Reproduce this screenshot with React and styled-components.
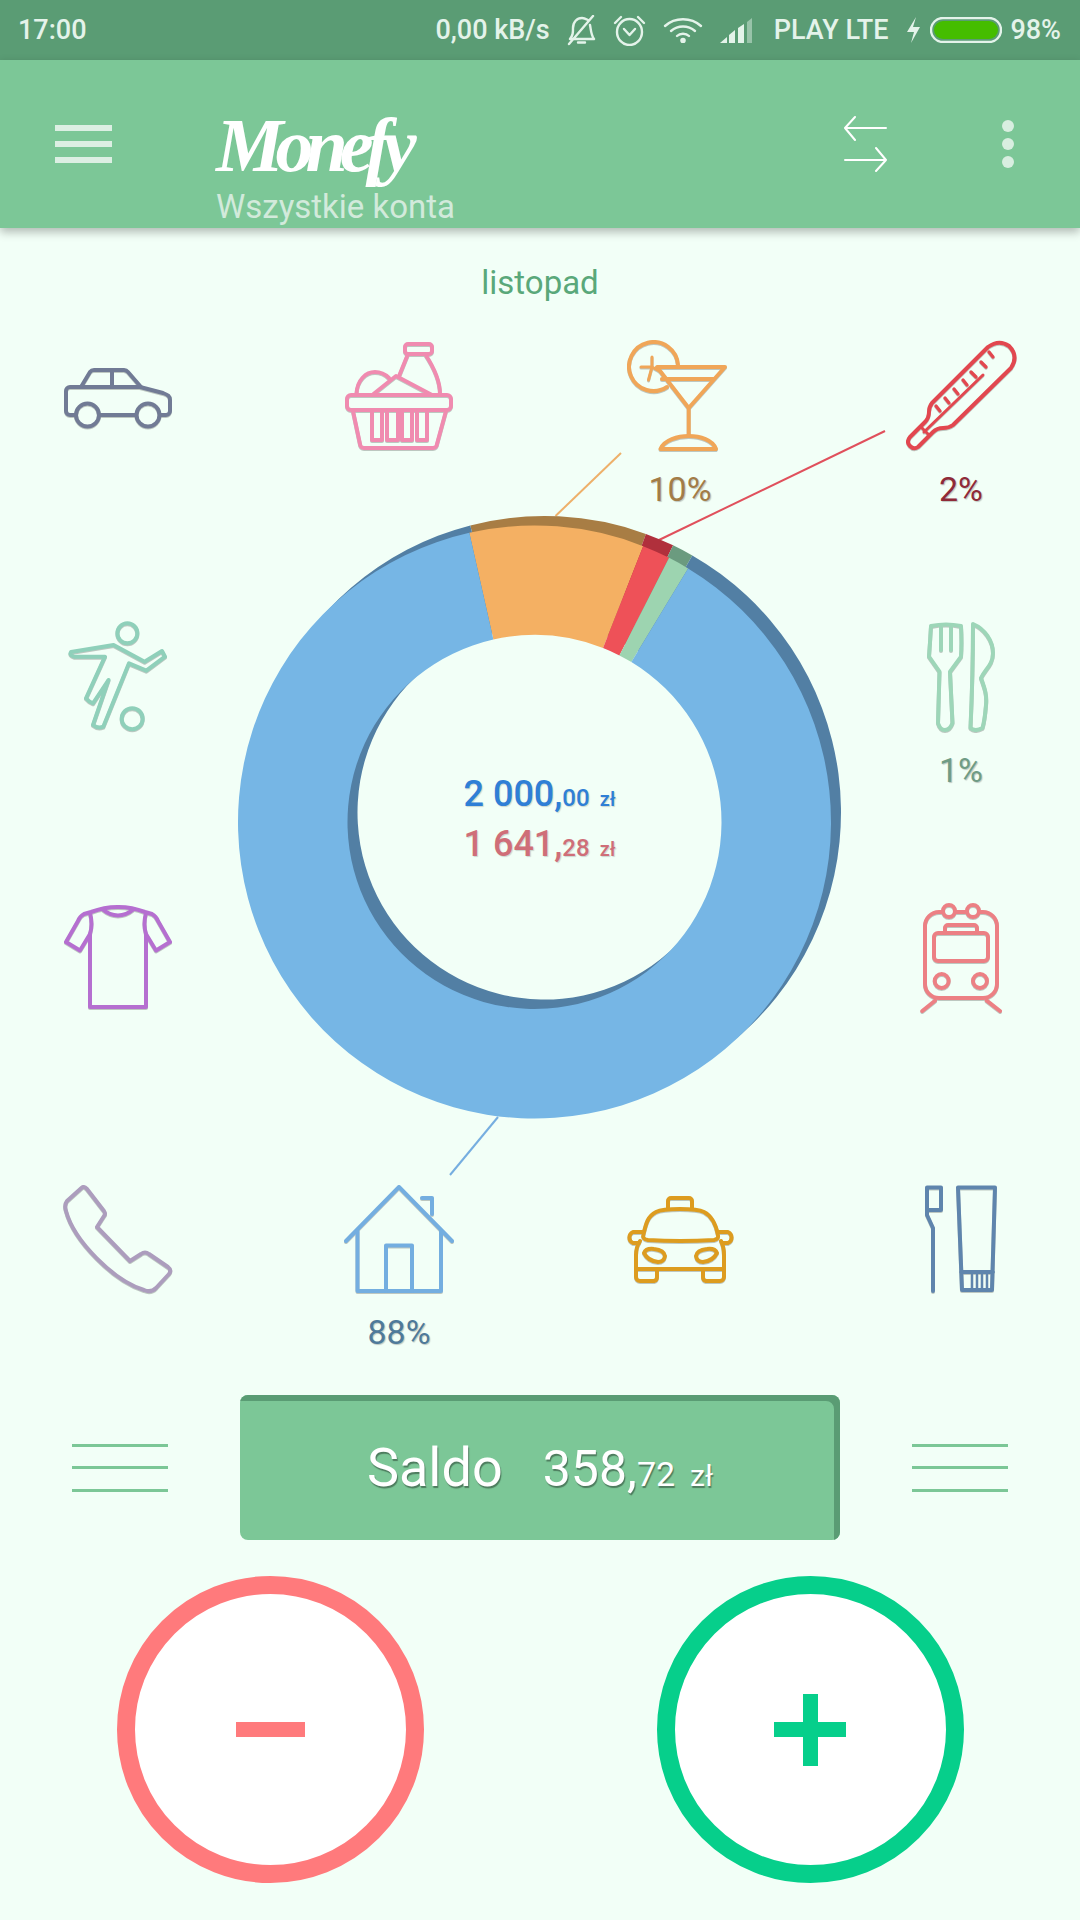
import React from 'react';
import styled, { createGlobalStyle } from 'styled-components';

const Global = createGlobalStyle`
  html, body { margin: 0; padding: 0; background: #f2fff7; }
  * { box-sizing: border-box; }
`;

const GREEN = '#7cc797';
const DARK_GREEN = '#5a9c74';
const SANS = 'Roboto, "Liberation Sans", sans-serif';

const Page = styled.div`
  width: 1080px;
  height: 1920px;
  overflow: hidden;
  background: #f2fff7;
  font-family: ${SANS};
`;

const StatusBar = styled.div`
  height: 60px;
  background: ${DARK_GREEN};
  display: flex;
  align-items: center;
  justify-content: space-between;
  padding: 0 19px 0 18px;
  color: #e4f3ea;
  font-size: 27px;
  font-weight: 500;
`;

const StatusGroup = styled.div`
  display: flex;
  align-items: center;
  gap: ${(p) => p.$gap}px;
`;

const StatusIcon = styled.svg`
  display: block;
  fill: none;
  stroke: #e4f3ea;
  stroke-width: 2.4;
  stroke-linecap: round;
  stroke-linejoin: round;
`;

const AppBar = styled.header`
  position: relative;
  z-index: 2;
  height: 168px;
  background: ${GREEN};
  box-shadow: 0 4px 9px rgba(0, 0, 0, 0.28);
  display: flex;
  align-items: center;
  padding: 0 66px 0 55px;
`;

const MenuLines = styled.div`
  width: 57px;
  height: 38px;
  display: flex;
  flex-direction: column;
  justify-content: space-between;
  margin-right: 104px;
  & > i {
    display: block;
    height: 6px;
    background: #dcefe3;
  }
`;

const TitleBlock = styled.div`
  flex: 1;
  align-self: stretch;
  display: flex;
  flex-direction: column;
  justify-content: flex-end;
  padding-bottom: 2px;
`;

const Logo = styled.div`
  font-family: "Liberation Serif", serif;
  font-style: italic;
  font-weight: 700;
  font-size: 76px;
  line-height: 84px;
  letter-spacing: -8px;
  color: #ffffff;
`;

const Subtitle = styled.div`
  font-size: 33px;
  line-height: 39px;
  color: #d2eadb;
`;

const SwapIcon = styled.svg`
  display: block;
  margin-right: 115px;
  fill: none;
  stroke: #ffffff;
  stroke-width: 2;
  stroke-linecap: round;
  stroke-linejoin: round;
`;

const DotsColumn = styled.div`
  display: flex;
  flex-direction: column;
  gap: 6px;
  & > i {
    display: block;
    width: 12px;
    height: 12px;
    border-radius: 50%;
    background: #d8eee0;
  }
`;

const MonthTitle = styled.div`
  height: 114px;
  padding-top: 35px;
  text-align: center;
  font-size: 33px;
  line-height: 39px;
  color: #5aa87a;
`;

const Board = styled.section`
  position: relative;
  display: grid;
  grid-template-columns: repeat(4, 108px);
  grid-auto-rows: 108px;
  gap: 173px;
  padding-left: 64px;
`;

const ChartSvg = styled.svg`
  position: absolute;
  inset: 0;
  display: block;
`;

const Tile = styled.div`
  position: relative;
  width: 108px;
  height: 108px;
  grid-column: ${(p) => p.$col};
  grid-row: ${(p) => p.$row};
`;

const Glyph = styled.svg`
  display: block;
  overflow: visible;
  fill: none;
  stroke: ${(p) => p.$color};
  stroke-width: 4;
  stroke-linecap: round;
  stroke-linejoin: round;
  filter: drop-shadow(0.5px 1px 0.5px rgba(0, 0, 0, 0.22));
`;

const Percent = styled.div`
  position: absolute;
  top: 100%;
  left: 0;
  right: 0;
  margin-top: 19px;
  text-align: center;
  font-size: 34px;
  line-height: 40px;
  color: ${(p) => p.$color};
  text-shadow: 1px 1px 1px rgba(0, 0, 0, 0.22);
`;

const ChartCenter = styled.div`
  position: relative;
  grid-column: 2 / span 2;
  grid-row: 2 / span 2;
  display: flex;
  flex-direction: column;
  align-items: center;
  justify-content: center;
  padding-top: 9px;
`;

const Amount = styled.div`
  display: flex;
  align-items: baseline;
  font-size: 36px;
  line-height: 45px;
  font-weight: 500;
  white-space: pre;
  color: ${(p) => p.$color};
  text-shadow: 1px 1px 1px rgba(0, 0, 0, 0.16);
`;

const Cents = styled.span`
  font-size: 24px;
`;

const Currency = styled.span`
  font-size: 20px;
  margin-left: 10px;
`;

const BalanceRow = styled.section`
  margin-top: 102px;
  display: flex;
  align-items: center;
  justify-content: center;
  gap: 72px;
`;

const SideLines = styled.div`
  width: 96px;
  height: 48px;
  display: flex;
  flex-direction: column;
  justify-content: space-between;
  & > i {
    display: block;
    height: 3px;
    background: ${GREEN};
  }
`;

const BalanceCard = styled.div`
  width: 600px;
  height: 145px;
  padding-top: 6px;
  border-radius: 8px;
  background: ${GREEN};
  box-shadow: inset -6px 6px 0 ${DARK_GREEN};
  display: flex;
  align-items: baseline;
  justify-content: center;
  line-height: 133px;
  color: #ffffff;
  white-space: pre;
  text-shadow: 1px 2px 1px rgba(0, 0, 0, 0.38);
`;

const BalanceLabel = styled.span`
  font-size: 54px;
  margin-right: 40px;
`;

const BalanceWhole = styled.span`
  font-size: 50px;
`;

const BalanceCents = styled.span`
  font-size: 34px;
`;

const BalanceCurrency = styled.span`
  font-size: 30px;
  margin-left: 15px;
`;

const ActionRow = styled.section`
  margin-top: 36px;
  display: flex;
  justify-content: center;
  gap: 233px;
`;

const RoundButton = styled.button`
  width: 307px;
  height: 307px;
  padding: 0;
  border-radius: 50%;
  border: 18px solid ${(p) => p.$color};
  background: #ffffff;
  display: flex;
  align-items: center;
  justify-content: center;
`;

const MinusSign = styled.i`
  display: block;
  width: 69px;
  height: 15px;
  background: #ff7a7c;
`;

const PlusSign = styled.i`
  display: block;
  width: 72px;
  height: 72px;
  background:
    linear-gradient(#06cf8b, #06cf8b) center / 100% 15px no-repeat,
    linear-gradient(#06cf8b, #06cf8b) center / 15px 100% no-repeat;
`;

const arcPoint = (cx, cy, r, deg) => {
  const t = (deg * Math.PI) / 180;
  return [cx + r * Math.sin(t), cy - r * Math.cos(t)];
};

// Annular sector measured clockwise from twelve o'clock.
const sector = (cx, cy, ro, ri, from, to) => {
  const [ax, ay] = arcPoint(cx, cy, ro, from);
  const [bx, by] = arcPoint(cx, cy, ro, to);
  const [ix, iy] = arcPoint(cx, cy, ri, to);
  const [jx, jy] = arcPoint(cx, cy, ri, from);
  const large = to - from > 180 ? 1 : 0;
  return `M${ax} ${ay}A${ro} ${ro} 0 ${large} 1 ${bx} ${by}L${ix} ${iy}A${ri} ${ri} 0 ${large} 0 ${jx} ${jy}Z`;
};

const RING_OUTER = 296.5;
const RING_INNER = 187;

const backSlices = [
  { from: -14.5, to: 20, fill: '#a87d44' },
  { from: 20, to: 25.7, fill: '#b0303c' },
  { from: 25.7, to: 29.9, fill: '#6b9b7f' },
  { from: 29.9, to: 345.5, fill: '#527fa4' },
];

const frontSlices = [
  { from: -12.7, to: 21.5, fill: '#f4b063' },
  { from: 21.5, to: 27, fill: '#ee5158' },
  { from: 27, to: 31.2, fill: '#9dd4b0' },
  { from: 31.2, to: 347.3, fill: '#76b6e5' },
];

const leaders = [
  { x1: 555.5, y1: 516, x2: 621, y2: 453, stroke: '#eeb06a' },
  { x1: 659, y1: 540, x2: 885, y2: 431, stroke: '#e0505c' },
  { x1: 498, y1: 1117, x2: 450, y2: 1175, stroke: '#76aee0' },
];

const categories = [
  {
    col: 1, row: 1, color: '#717b95',
    art: (
      <>
        <path d="M11 73H6a4 4 0 0 1-4-4V49a4 4 0 0 1 4-4H76L99 51C104 53 106 54 106 58V69a4 4 0 0 1-4 4H96M36 73H72" />
        <path d="M17 45L26 30a5 5 0 0 1 4-2H60a6 6 0 0 1 4 2L77 45M48 28V45" />
        <circle cx="23.5" cy="73" r="11.5" />
        <circle cx="84" cy="73" r="11.5" />
      </>
    ),
  },
  {
    col: 2, row: 1, color: '#f08bb0',
    art: (
      <>
        <rect x="60" y="2" width="27" height="10" rx="3" />
        <path d="M63 12L54.5 33M80 12C88 24 95 38 95 52" />
        <path d="M11.5 52C12 38 21 30 30 30C36 30 40 32 44 36" />
        <path d="M28.5 52L51 34L87 53" />
        <rect x="2" y="53" width="104" height="15" rx="4" />
        <path d="M8 69L15 102a4 4 0 0 0 4 4H88a4 4 0 0 0 4-4L101 69" />
        <path d="M27 69V98H37V69M42 69V98H53V69M57 69V98H67V69M72 69V98H82V69" />
      </>
    ),
  },
  {
    col: 3, row: 1, color: '#f0a658', percent: '10%', percentColor: '#a37c47',
    art: (
      <>
        <path d="M52 23A24.5 24.5 0 1 0 41 45" />
        <path d="M31 25H99L62.7 66ZM36 37H88M62.7 66V94" />
        <path d="M34.5 107C38 98 52 94 62.7 94C74 94 87 98 90 107Z" />
        <path d="M15 25H26M26 15V25L22.5 38M26 25L35 30" strokeWidth="3" />
      </>
    ),
  },
  {
    col: 4, row: 1, color: '#e2474f', percent: '2%', percentColor: '#8f2a38',
    art: (
      <>
        <path d="M81 5Q92-3 102 4Q112 14 104 26L46 83Q42 86 36 86Q30 86 26 90L11 105Q7 108 3 104Q-1 100 3 95L18 80Q22 76 22 70Q22 65 25 61Z" />
        <path d="M76 33L17 90M14 85L22 93" strokeWidth="3" />
        <path d="M82 10L86 15M74 20L79 25M64 30L69 35M56 38L60 43M47 47L51 52M38 56L42 61M29 64L33 69" strokeWidth="3.4" />
      </>
    ),
  },
  {
    col: 1, row: 2, color: '#8fd0ba',
    art: (
      <>
        <circle cx="63.4" cy="10.3" r="10" />
        <circle cx="68.2" cy="95.7" r="10.5" />
        <path d="M7 29L49.6 22L80.6 38.7L98 28L101 33.7L82.3 47.7L65 40.3L39.3 103.7Q34 106 29 102L44.5 57L29 80.3Q25 79 22 75.3L41 33.7H10Q5 32 7 29Z" />
      </>
    ),
  },
  {
    col: 4, row: 2, color: '#9dd6b8', percent: '1%', percentColor: '#6f9c85',
    art: (
      <>
        <path d="M24 3Q39 0 54 3Q55 20 54 33.7L43 48.7L45.5 100Q43 107 38 107Q33 107 31 100L32.5 48.7L22 33.7Q23 20 24 3ZM34 4V27M44 4V27" />
        <path d="M66 1C78 6 86 18 86 30C86 42 78 46 74 55C78 66 80 72 79 82C78 94 77 100 75.5 105Q68 109 63.5 105Q66 50 66 1Z" />
      </>
    ),
  },
  {
    col: 1, row: 3, color: '#b56fd0',
    art: (
      <>
        <path d="M27 8L20 10Q16 12 14 17L2 38L16 46.5L26 30V103H82V30L92 46.5L106 38L94 17Q92 12 88 10L81 8Q54-2 27 8Z" />
        <path d="M26 30Q29 20 26 9M82 30Q79 20 82 9M38 5Q54 18 70 5" />
      </>
    ),
  },
  {
    col: 4, row: 3, color: '#ec8084',
    art: (
      <>
        <path d="M36 8H32a14 14 0 0 0-14 14V80a14 14 0 0 0 14 14H76a14 14 0 0 0 14-14V22a14 14 0 0 0-14-14H72M48 8H60" />
        <circle cx="42" cy="7" r="6" />
        <circle cx="66" cy="7" r="6" />
        <rect x="27" y="29" width="54" height="28" rx="4" />
        <path d="M38 29V24a3 3 0 0 1 3-3H67a3 3 0 0 1 3 3V29" />
        <circle cx="34.7" cy="77" r="7" />
        <circle cx="73" cy="77" r="7" />
        <path d="M28 96.7L15.3 107M79.7 96.7L93 107" />
      </>
    ),
  },
  {
    col: 1, row: 4, color: '#ac9dbd',
    art: (
      <path d="M18 2.5Q20 1 23 4L40 26Q42 29 40 31L33 42L66 76L77 69Q81 66 85 69L104 82Q108 85 105 89L92 103Q87 108 80 105C50 96 10 56 2 26Q0 20 3 16Z" />
    ),
  },
  {
    col: 2, row: 4, color: '#74aee0', percent: '88%', percentColor: '#4f7a9a',
    art: (
      <>
        <path d="M1 56L54 2L107 56" />
        <path d="M12.5 46V106H96V46" />
        <path d="M41 106V60.5H67V106" />
        <path d="M77 13H87V29" />
      </>
    ),
  },
  {
    col: 3, row: 4, color: '#dd9c1f',
    art: (
      <>
        <path d="M42 23V16a3 3 0 0 1 3-3H63a3 3 0 0 1 3 3V23" />
        <path d="M17.3 50C20 38 22 31 30 27C38 23 70 23 78 27C86 31 90 40 92 50Q93 54 88 55Q54 57 22 55Q16 54 17.3 50Z" />
        <path d="M17 47H7a6 6 0 0 0 0 11H13M92 47H102a6 6 0 0 1 0 11H96" />
        <path d="M14 56Q10 62 10 70V92a4 4 0 0 0 4 4H28a4 4 0 0 0 3-4V84M95 56Q98 62 98 70V92a4 4 0 0 1-4 4H80a4 4 0 0 1-3-4V84M10 84H98" />
        <path d="M18 68Q20 63 28 64Q38 65 39 71Q38 77 32 77Q22 76 18 68Z" />
        <path d="M91 68Q89 63 81 64Q71 65 70 71Q71 77 77 77Q87 76 91 68Z" />
      </>
    ),
  },
  {
    col: 4, row: 4, color: '#5f85ad',
    art: (
      <>
        <path d="M26 106V43L20 30V2.5H34V25H20" />
        <path d="M51 2.5H88L85 105H55ZM54 87H86" />
        <path d="M65 88V104M70 88V104M75 88V104M80 88V104" strokeWidth="2.4" strokeLinecap="butt" />
      </>
    ),
  },
];

function CategoryTile({ col, row, color, art, percent, percentColor }) {
  return (
    <Tile $col={col} $row={row}>
      <Glyph $color={color} width="108" height="108" viewBox="0 0 108 108">
        {art}
      </Glyph>
      {percent && <Percent $color={percentColor}>{percent}</Percent>}
    </Tile>
  );
}

function StatusIcons() {
  return (
    <>
      <StatusIcon width="29" height="31" viewBox="0 0 29 31">
        <path d="M3 24C6 20 6 18 6 13C6 7 10 3 15 3C17 3 19 4 21 5M23 10C24 15 24 20 27 24H3M11 27.500H18M26 1L2 29" />
      </StatusIcon>
      <StatusIcon width="33" height="31" viewBox="0 0 33 31">
        <ellipse cx="16.500" cy="17" rx="12.500" ry="13" />
        <path d="M11 14L16.500 20L22 14M2 8L8 2M31 8L25 2" />
      </StatusIcon>
      <StatusIcon width="40" height="26" viewBox="0 0 40 26" strokeWidth="3.2">
        <path d="M2 9C12 0 28 0 38 9M8 14C15 8 25 8 32 14M14 19C17 16 23 16 26 19" />
        <circle cx="20" cy="23.500" r="1.600" fill="#e4f3ea" />
      </StatusIcon>
      <StatusIcon width="37" height="25" viewBox="0 0 37 25" stroke="none">
        <path d="M0 25L7 19V25Z" fill="#e4f3ea" stroke="none" />
        <path d="M9 17L15 12V25H9Z" fill="#e4f3ea" stroke="none" />
        <path d="M18 10L24 6V25H18Z" fill="#e4f3ea" stroke="none" />
        <path d="M27 4L32 0V25H27Z" fill="#e4f3ea" fillOpacity="0.45" stroke="none" />
      </StatusIcon>
    </>
  );
}

function BatteryIcon() {
  return (
    <StatusIcon width="72" height="26" viewBox="0 0 72 26" strokeWidth="2">
      <rect x="1" y="1" width="70" height="24" rx="12" />
      <rect x="4" y="4" width="64" height="18" rx="9" fill="#45bd00" stroke="none" />
    </StatusIcon>
  );
}

export default function App() {
  return (
    <Page>
      <Global />
      <StatusBar>
        <span>17:00</span>
        <StatusGroup $gap={17}>
          <span>0,00 kB/s</span>
          <StatusIcons />
          <span>PLAY LTE</span>
          <StatusGroup $gap={8}>
            <StatusIcon width="17" height="28" viewBox="0 0 17 28">
              <path d="M11 1L2 16H9L6 27L15 11H8Z" fill="#e4f3ea" stroke="none" />
            </StatusIcon>
            <BatteryIcon />
            <span>98%</span>
          </StatusGroup>
        </StatusGroup>
      </StatusBar>

      <AppBar>
        <MenuLines>
          <i />
          <i />
          <i />
        </MenuLines>
        <TitleBlock>
          <Logo>Monefy</Logo>
          <Subtitle>Wszystkie konta</Subtitle>
        </TitleBlock>
        <SwapIcon width="44" height="56" viewBox="0 0 44 56">
          <path d="M43 12H2M12 1L2 12L12 24M2 44H43M33 32L43 44L33 55" />
        </SwapIcon>
        <DotsColumn>
          <i />
          <i />
          <i />
        </DotsColumn>
      </AppBar>

      <MonthTitle>listopad</MonthTitle>

      <Board>
        <ChartSvg width="1080" height="951" viewBox="0 342 1080 951">
          {leaders.map((l) => (
            <line key={l.stroke} {...l} strokeWidth="2" />
          ))}
          {backSlices.map((s) => (
            <path key={s.fill} d={sector(544.5, 812.5, RING_OUTER, RING_INNER, s.from, s.to)} fill={s.fill} />
          ))}
          {frontSlices.map((s) => (
            <path key={s.fill} d={sector(534.5, 822, RING_OUTER, RING_INNER, s.from, s.to)} fill={s.fill} />
          ))}
        </ChartSvg>
        {categories.map((c) => (
          <CategoryTile key={`${c.col}-${c.row}`} {...c} />
        ))}
        <ChartCenter>
          <Amount $color="#2f7fd6">
            2{'\u00a0'}000,<Cents>00</Cents>
            <Currency>zł</Currency>
          </Amount>
          <Amount $color="#cf6e78">
            1{'\u00a0'}641,<Cents>28</Cents>
            <Currency>zł</Currency>
          </Amount>
        </ChartCenter>
      </Board>

      <BalanceRow>
        <SideLines>
          <i />
          <i />
          <i />
        </SideLines>
        <BalanceCard>
          <BalanceLabel>Saldo</BalanceLabel>
          <BalanceWhole>358,</BalanceWhole>
          <BalanceCents>72</BalanceCents>
          <BalanceCurrency>zł</BalanceCurrency>
        </BalanceCard>
        <SideLines>
          <i />
          <i />
          <i />
        </SideLines>
      </BalanceRow>

      <ActionRow>
        <RoundButton $color="#ff7a7c">
          <MinusSign />
        </RoundButton>
        <RoundButton $color="#06cf8b">
          <PlusSign />
        </RoundButton>
      </ActionRow>
    </Page>
  );
}
